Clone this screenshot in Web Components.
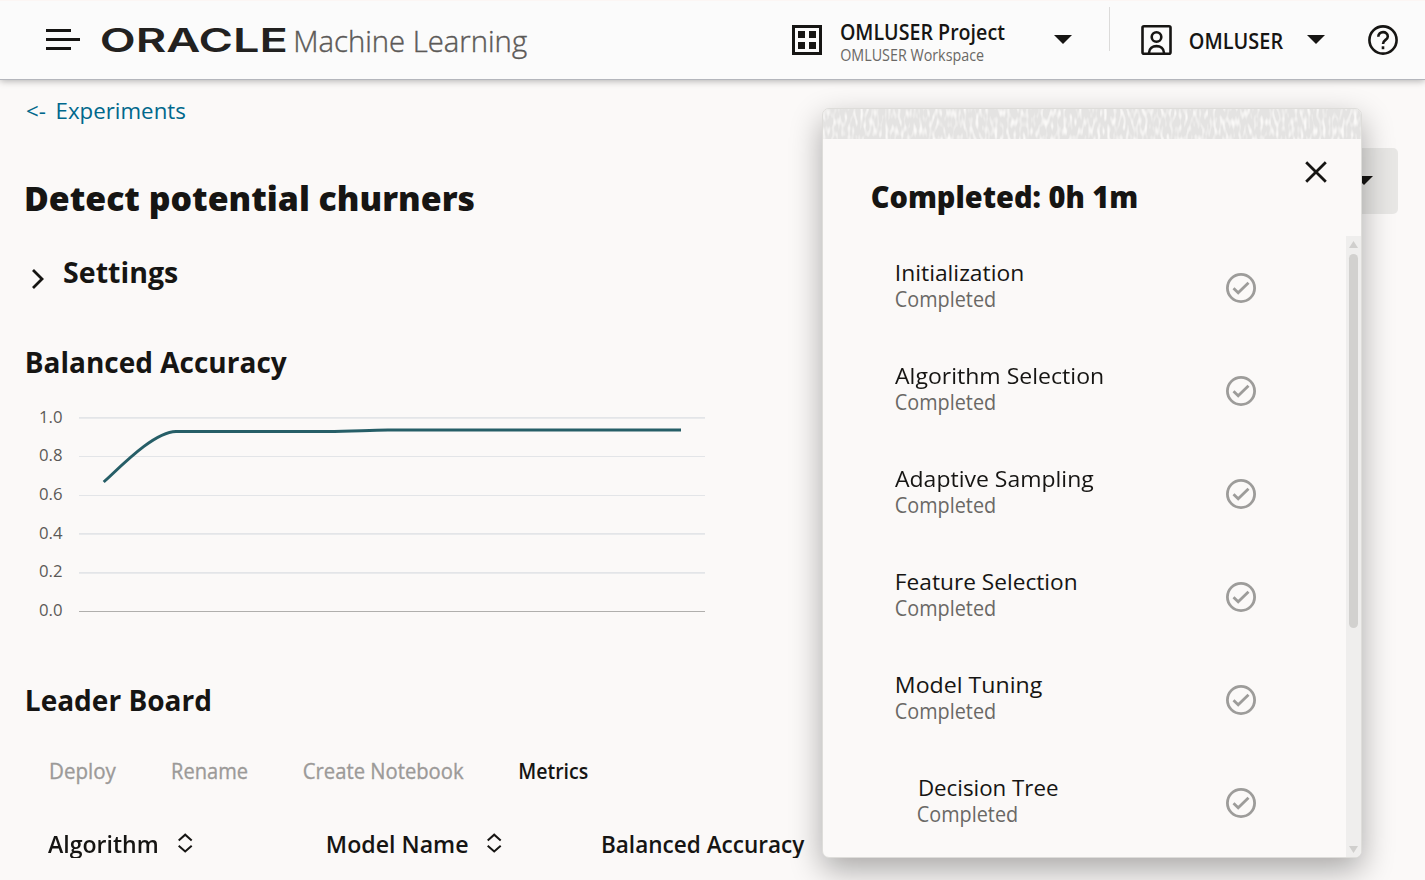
<!DOCTYPE html>
<html lang="en">
<head>
<meta charset="utf-8">
<title>Oracle Machine Learning</title>
<style>
html,body{margin:0;height:100%}
body{width:1425px;height:880px;overflow:hidden;background:#fbf9f8;color:#161513;font-family:"Noto Sans","Open Sans",sans-serif}
</style>
</head>
<body>
<oml-app></oml-app>
<script>
const canvas = document.createElement('canvas').getContext('2d');

/* Text run whose box is its cap height, fitted to a given ink width. */
class UiText extends HTMLElement {
  connectedCallback() {
    if (this.shadowRoot) return;
    const cap = +this.getAttribute('cap');
    const width = +this.getAttribute('w');
    const gap = +(this.getAttribute('gap') || 0);
    const weight = this.getAttribute('weight') || 400;
    const family = this.getAttribute('font') || 'Open Sans';
    const size = cap / (family === 'Inter' ? 0.727 : 0.714);
    const stack = `"${family}", "Noto Sans", sans-serif`;
    const text = this.textContent;
    /* measured ten times larger, since ink bounds come in whole pixels */
    canvas.font = `${weight} ${size * 10}px ${stack}`;
    const m = canvas.measureText(text);
    const left = m.actualBoundingBoxLeft / 10;
    const ink = m.actualBoundingBoxRight / 10 + left + gap * (text.split(' ').length - 1);
    const scale = width / ink;
    const shift = family === 'Inter' ? 0 : (cap > 12 ? 0 : 1);
    this.attachShadow({mode: 'open'}).innerHTML = `<style>
      :host{display:block;flex:none;width:${width}px;height:${cap}px}
      span{display:block;width:max-content;white-space:pre;word-spacing:${gap}px;font:${weight} ${size}px ${stack};line-height:${cap}px;
        -webkit-text-stroke:var(--embolden,0);
        transform-origin:0 0;transform:translate(${left * scale}px,${shift}px) scaleX(${scale})}
      </style><span><slot></slot></span>`;
  }
}
customElements.define('ui-text', UiText);

const define = (name, html) => customElements.define(name, class extends HTMLElement {
  constructor() {
    super();
    this.attachShadow({mode: 'open'}).innerHTML = html;
  }
});

define('ui-caret', `<style>:host{display:block;flex:none;width:18px;height:9px}svg{display:block}</style>
<svg width="18" height="9"><path d="M0 0H18L9 9Z" fill="#161513"/></svg>`);

define('ui-sort', `<style>:host{display:block;flex:none;width:16px;height:20px}svg{display:block}</style>
<svg width="16" height="20" fill="none" stroke="#161513" stroke-width="2"><path d="M1.7 7.5L8.2 1.7L14.7 7.5M1.7 12.8L8.2 18.5L14.7 12.8"/></svg>`);

define('oml-header', `<style>
:host{display:flex;box-sizing:border-box;height:80px;background:#fbfbfb;border-bottom:1px solid #b4b6bc;box-shadow:0 1px 7px rgba(0,0,0,.3);position:relative;border-top:1px solid #fcf6f4}
svg{display:block;flex:none}
.menu{margin:28px 0 0 46px}
.logo{margin:27px 0 0 22px;color:#222120}
.product{margin:30px 0 0 10px;color:#5b5957;--embolden:.4px}
.grid{margin:24px 0 0 264.5px}
.proj{margin:24px 0 0 18.5px;display:flex;flex-direction:column;gap:9px;width:164px}
.proj ui-text{margin-left:.7px}
.sub{color:#6a6865}
.c1{margin:34px 0 0 50px}
.div{width:1px;height:44px;margin:6px 0 0 37px;background:#dcdbda}
.user{margin:24px 0 0 31px}
.name{margin:33px 0 0 18px}
.c2{margin:34px 0 0 24px}
.help{margin:24px 0 0 43px}
</style>
<svg class="menu" width="34" height="22" fill="#161513"><path d="M0 0H25V3H0ZM0 9H34V12H0ZM0 18H25V21H0Z"/></svg>
<ui-text class="logo" cap="24" w="184" weight="600" font="Inter">ORACLE</ui-text>
<ui-text class="product" cap="21" w="231" weight="300">Machine Learning</ui-text>
<svg class="grid" width="30" height="30"><path d="M1.5 1.5H28.5V28.5H1.5Z" fill="none" stroke="#161513" stroke-width="3"/><path d="M6 6H13V13H6ZM17 6H24V13H17ZM6 17H13V24H6ZM17 17H24V24H17Z" fill="#161513"/></svg>
<div class="proj"><ui-text cap="15" w="163.5" weight="600">OMLUSER Project</ui-text><ui-text class="sub" cap="11" w="142.5">OMLUSER Workspace</ui-text></div>
<ui-caret class="c1"></ui-caret>
<div class="div"></div>
<svg class="user" width="31" height="30" fill="none" stroke="#161513" stroke-width="2.6"><rect x="1.5" y="1.3" width="28" height="27.4" rx="1.5"/><circle cx="15.5" cy="12" r="4.8"/><path d="M8 28C8 18.8 23 18.8 23 28"/></svg>
<ui-text class="name" cap="15" w="93" weight="600">OMLUSER</ui-text>
<ui-caret class="c2"></ui-caret>
<svg class="help" width="30" height="30" fill="none" stroke="#161513" stroke-width="2.6"><circle cx="15" cy="15" r="13.6"/><path d="M10.3 11.8C10.3 5.6 19.8 5.6 19.8 11.4C19.8 15 15 14.8 15 19"/><path d="M15 21.3V24.2"/></svg>`);

define('accuracy-chart', `<style>:host{display:block;width:690px;height:220px}svg{display:block;overflow:visible}
text{font:400 17px "Open Sans","Noto Sans",sans-serif;fill:#5b5957}</style>
<svg width="690" height="220">
<g stroke="#e3e5e8"><path d="M54 12.8H680M54 128.8H680M54 167.8H680" stroke-width="1.8"/><path d="M54 51.5H680M54 90.5H680" stroke-width="1.2"/></g>
<path d="M54 206.5H680" stroke="#b0afad"/>
<path d="M78.7 77C94 63.5 128 27 151 26.5H302C328 26.5 343 25 363 25H656" fill="none" stroke="#265e67" stroke-width="3"/>
<g><text x="14" y="18" textLength="23.5" lengthAdjust="spacingAndGlyphs">1.0</text><text x="14" y="56" textLength="23.5" lengthAdjust="spacingAndGlyphs">0.8</text><text x="14" y="95" textLength="23.5" lengthAdjust="spacingAndGlyphs">0.6</text><text x="14" y="134" textLength="23.5" lengthAdjust="spacingAndGlyphs">0.4</text><text x="14" y="172" textLength="23.5" lengthAdjust="spacingAndGlyphs">0.2</text><text x="14" y="211" textLength="23.5" lengthAdjust="spacingAndGlyphs">0.0</text></g>
</svg>`);

define('experiment-view', `<style>
:host{display:block;padding:23px 27px 0 25px}
.back{color:#00688c;margin-left:2px}
.title{display:flex;justify-content:space-between;height:66px;margin-top:29px}
.title ui-text{margin:38px 0 0 1px}
.btn{width:160px;height:66px;box-sizing:border-box;background:#e8e7e5;border-radius:5px;display:flex;justify-content:flex-end;padding:28px 25px 0 0}
.settings{display:flex;margin-top:48px;height:21px}
.settings svg{margin:7px 20px 0 6.5px;overflow:visible}
.h1{margin:69px 0 0 1.5px}
accuracy-chart{margin-top:32px}
.h2{margin:65px 0 0 1.5px}
.bar{display:flex;margin:53px 0 0 26px;color:#9c9a98;--embolden:.35px}
.bar ui-text+ui-text{margin-left:56.8px}
.bar .on{color:#161513;--embolden:0}
.cols{display:flex;margin:51px 0 0 23px;padding-top:6px;height:22px;overflow:hidden}
.cols ui-sort{margin:-3px 0 0 20px}
.m{margin-left:134.6px}.cols .m+ui-sort{margin-left:19px}.b{margin-left:100.8px}
</style>
<ui-text class="back" cap="16" w="158" gap="4">&lt;- Experiments</ui-text>
<div class="title"><ui-text cap="24" w="448" weight="800">Detect potential churners</ui-text><div class="btn"><ui-caret></ui-caret></div></div>
<div class="settings"><svg width="12" height="20" fill="none" stroke="#161513" stroke-width="2.8"><path d="M1 1L10 10L1 19"/></svg><ui-text cap="21" w="113.5" weight="700">Settings</ui-text></div>
<ui-text class="h1" cap="21" w="260" weight="700">Balanced Accuracy</ui-text>
<accuracy-chart></accuracy-chart>
<ui-text class="h2" cap="21" w="183" weight="700">Leader Board</ui-text>
<div class="bar"><ui-text cap="15" w="65" weight="400">Deploy</ui-text><ui-text cap="15" w="74" weight="400">Rename</ui-text><ui-text cap="15" w="159.5" weight="400">Create Notebook</ui-text><ui-text class="on" cap="15" w="67.5" weight="600">Metrics</ui-text></div>
<div class="cols"><ui-text cap="17" w="109" weight="600">Algorithm</ui-text><ui-sort></ui-sort><ui-text class="m" cap="17" w="139.5" weight="600">Model Name</ui-text><ui-sort></ui-sort><ui-text class="b" cap="17" w="201.5" weight="600">Balanced Accuracy</ui-text></div>`);

define('progress-step', `<style>
:host{display:flex;justify-content:space-between;height:42px;flex:none}
.t{display:flex;flex-direction:column;gap:11px}
svg{display:block;margin-top:8px}
::slotted([slot=state]){color:#6a6865}
::slotted(.stem){margin-left:1.3px}
::slotted(.apex){margin-left:-.7px}
</style><div class="t"><slot></slot><slot name="state"></slot></div>
<svg width="30" height="30" fill="none" stroke="#9d9c9a" stroke-width="2.8"><circle cx="15" cy="15" r="13.6"/><path d="M7.5 15.2L12.2 19.8L22.5 9.7"/></svg>`);

define('progress-panel', `<style>
:host{display:flex;flex-direction:column;position:absolute;left:822px;top:108px;width:540px;height:750px;box-sizing:border-box;background:#fbf9f8;border:1px solid #deddda;border-radius:7px;box-shadow:0 12px 32px rgba(0,0,0,.33);overflow:hidden}
.tex{display:block;flex:none}
.head{display:flex;justify-content:space-between;height:97px;flex:none}
.head ui-text{margin:48px 0 0 48.5px}
.head svg{margin:21.5px 34px 0 0}
.body{display:flex;flex:1;min-height:0}
.list{flex:1;display:flex;flex-direction:column;gap:61px;padding:29px 90px 0 72.6px;overflow:hidden}
.in{padding-left:22.7px}
.bar{width:15px;background:#efeeed;display:flex;flex-direction:column;align-items:center}
.bar svg{flex:none}
.up{margin-top:5px}.thumb{width:9px;height:374px;border-radius:5px;background:#d2d1cf;margin-top:6px}
.down{margin:auto 0 4px}
</style>
<svg class="tex" width="538" height="30"><defs><filter id="weave" x="0" y="0" width="100%" height="100%" color-interpolation-filters="sRGB"><feTurbulence type="fractalNoise" baseFrequency="0.32 0.11" numOctaves="1" seed="8"/><feColorMatrix values="0 0 0 0 .98  0 0 0 0 .975  0 0 0 0 .97  0 0 0 3.6 -1.65"/></filter></defs><rect width="538" height="30" fill="#e4e3e2"/><rect width="538" height="30" filter="url(#weave)"/></svg>
<div class="head"><ui-text cap="21" w="264.5" weight="800">Completed: 0h 1m</ui-text><svg width="22" height="22" stroke="#161513" stroke-width="2.8"><path d="M1.2 1.2L20.8 20.8M20.8 1.2L1.2 20.8"/></svg></div>
<div class="body"><div class="list">
<progress-step><ui-text class="stem" cap="16" w="125.5">Initialization</ui-text><ui-text slot="state" cap="15" w="98.5">Completed</ui-text></progress-step>
<progress-step><ui-text class="apex" cap="16" w="207.5">Algorithm Selection</ui-text><ui-text slot="state" cap="15" w="98.5">Completed</ui-text></progress-step>
<progress-step><ui-text class="apex" cap="16" w="198.5">Adaptive Sampling</ui-text><ui-text slot="state" cap="15" w="98.5">Completed</ui-text></progress-step>
<progress-step><ui-text class="stem" cap="16" w="179">Feature Selection</ui-text><ui-text slot="state" cap="15" w="98.5">Completed</ui-text></progress-step>
<progress-step><ui-text class="stem" cap="16" w="145">Model Tuning</ui-text><ui-text slot="state" cap="15" w="98.5">Completed</ui-text></progress-step>
<progress-step class="in"><ui-text class="stem" cap="16" w="137.5">Decision Tree</ui-text><ui-text slot="state" cap="15" w="98.5">Completed</ui-text></progress-step>
</div><div class="bar"><svg class="up" width="9" height="7"><path d="M4.5 0L9 7H0Z" fill="#d0cfcd"/></svg><div class="thumb"></div><svg class="down" width="9" height="7"><path d="M0 0H9L4.5 7Z" fill="#d0cfcd"/></svg></div></div>`);

define('oml-app', `<style>:host{display:block;position:relative;width:1425px;height:880px;overflow:hidden}</style>
<oml-header></oml-header><experiment-view></experiment-view><progress-panel></progress-panel>`);
</script>
</body>
</html>
